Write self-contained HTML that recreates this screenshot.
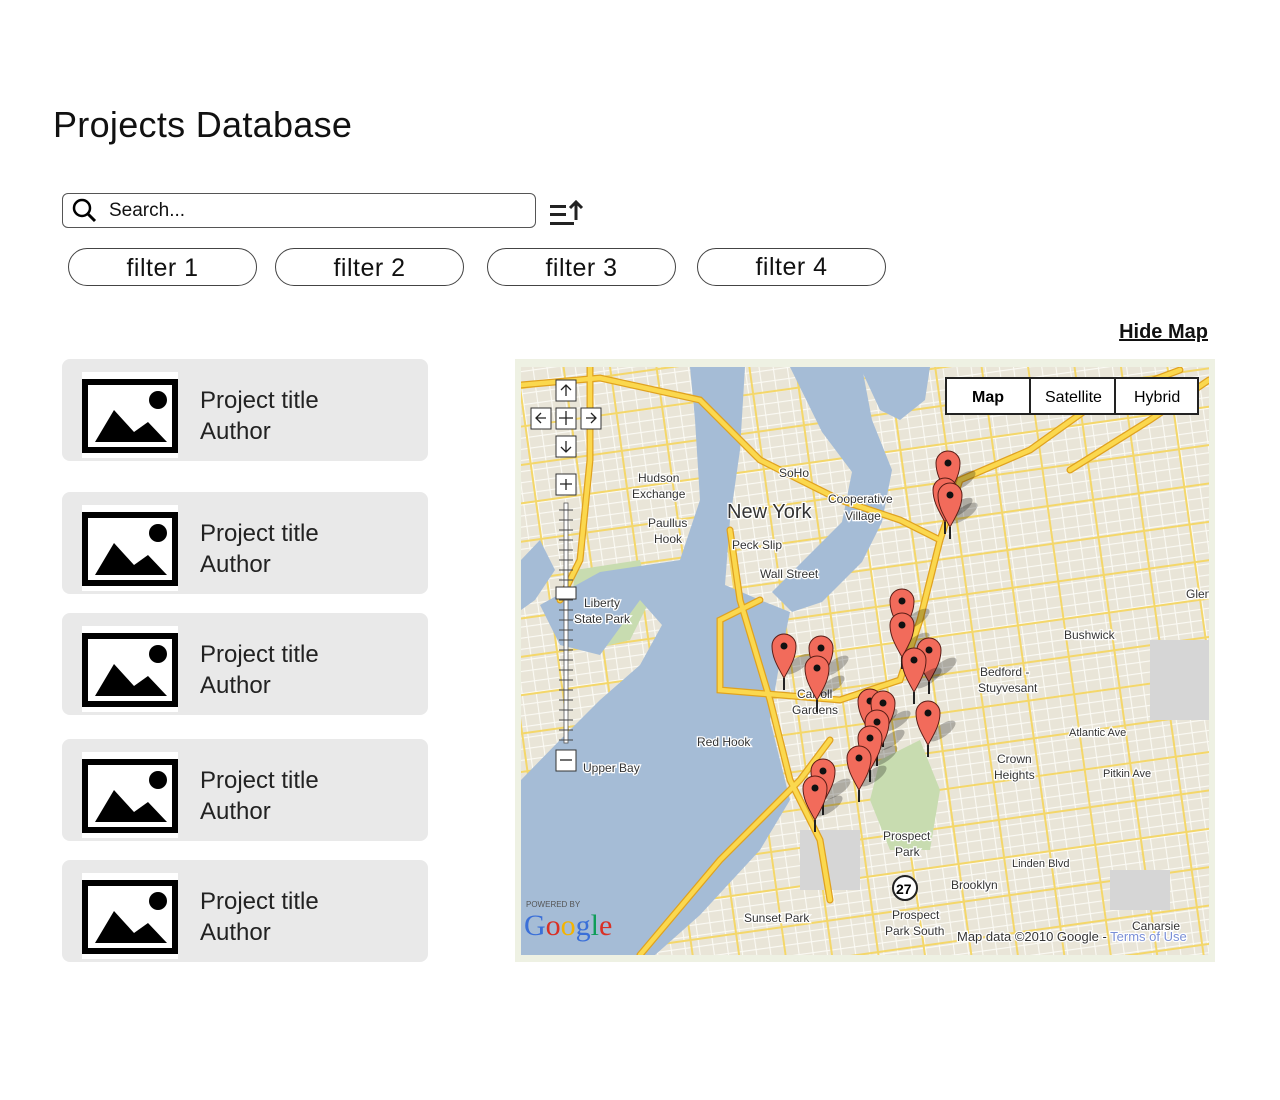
<!DOCTYPE html>
<html><head><meta charset="utf-8">
<style>
*{margin:0;padding:0;box-sizing:border-box}
body{width:1280px;height:1100px;background:#fff;font-family:"Liberation Sans",sans-serif;color:#111;position:relative;overflow:hidden}
.abs{position:absolute}
h1{position:absolute;left:53px;top:104px;font-size:36px;font-weight:normal;letter-spacing:0.3px}
.search{left:62px;top:193px;width:474px;height:35px;border:1.3px solid #555;border-radius:6px}
.search span{position:absolute;left:46px;top:6px;font-size:19px}
.pill{height:38px;border:1.3px solid #444;border-radius:19px;font-size:25px;text-align:center;line-height:38px;width:189px;top:248px;letter-spacing:0.5px}
.hide{right:72px;top:321px;font-size:20px;font-weight:bold;text-decoration:underline}
.card{left:62px;width:366px;height:102px;background:#e9e9e9;border-radius:8px}
.card .img{position:absolute;left:20px;top:13px;width:96px;height:86px;background:#fff}
.card .t{position:absolute;left:138px;top:26px;font-size:24px;line-height:31px;color:#222}
.map{left:515px;top:359px;width:700px;height:603px;background:#eef1e3}
.lbl{font-family:"Liberation Sans",sans-serif;font-size:12px;fill:#333;paint-order:stroke;stroke:#fff;stroke-width:2.5px}
</style></head><body>
<h1>Projects Database</h1>
<div class="abs search">
<svg class="abs" style="left:9px;top:4px" width="26" height="26" viewBox="0 0 26 26"><circle cx="10" cy="10" r="8" fill="none" stroke="#000" stroke-width="2.5"/><line x1="16" y1="16" x2="23" y2="23" stroke="#000" stroke-width="3"/></svg>
<span>Search...</span></div>
<svg class="abs" style="left:548px;top:196px" width="42" height="34" viewBox="0 0 42 34"><rect x="2" y="9" width="16" height="3" fill="#222"/><rect x="2" y="17" width="16" height="3" fill="#222"/><rect x="2" y="26" width="24" height="3" fill="#222"/><path d="M28 24V6M22 12l6-6 6 6" fill="none" stroke="#222" stroke-width="3"/></svg>
<div class="abs pill" style="left:68px">filter 1</div>
<div class="abs pill" style="left:275px">filter 2</div>
<div class="abs pill" style="left:487px">filter 3</div>
<div class="abs pill" style="left:697px;line-height:36px">filter 4</div>
<div class="abs hide">Hide Map</div>

<div class="abs card" style="top:359px"><div class="img"><svg width="96" height="86" viewBox="0 0 96 86"><rect x="3" y="10" width="90" height="68" fill="none" stroke="#000" stroke-width="6"/><circle cx="76" cy="28" r="9"/><path d="M13 70L32 38 52 60 66 50 85 70Z"/></svg></div><div class="t">Project title<br>Author</div></div>
<div class="abs card" style="top:492px"><div class="img"><svg width="96" height="86" viewBox="0 0 96 86"><rect x="3" y="10" width="90" height="68" fill="none" stroke="#000" stroke-width="6"/><circle cx="76" cy="28" r="9"/><path d="M13 70L32 38 52 60 66 50 85 70Z"/></svg></div><div class="t">Project title<br>Author</div></div>
<div class="abs card" style="top:613px"><div class="img"><svg width="96" height="86" viewBox="0 0 96 86"><rect x="3" y="10" width="90" height="68" fill="none" stroke="#000" stroke-width="6"/><circle cx="76" cy="28" r="9"/><path d="M13 70L32 38 52 60 66 50 85 70Z"/></svg></div><div class="t">Project title<br>Author</div></div>
<div class="abs card" style="top:739px"><div class="img"><svg width="96" height="86" viewBox="0 0 96 86"><rect x="3" y="10" width="90" height="68" fill="none" stroke="#000" stroke-width="6"/><circle cx="76" cy="28" r="9"/><path d="M13 70L32 38 52 60 66 50 85 70Z"/></svg></div><div class="t">Project title<br>Author</div></div>
<div class="abs card" style="top:860px"><div class="img"><svg width="96" height="86" viewBox="0 0 96 86"><rect x="3" y="10" width="90" height="68" fill="none" stroke="#000" stroke-width="6"/><circle cx="76" cy="28" r="9"/><path d="M13 70L32 38 52 60 66 50 85 70Z"/></svg></div><div class="t">Project title<br>Author</div></div>

<div class="abs map"></div>
<svg class="abs" style="left:521px;top:367px" width="688" height="588" viewBox="521 367 688 588">
<defs>
<g id="pin"><ellipse cx="14" cy="-14" rx="16" ry="6" fill="#000" opacity="0.25" transform="rotate(-35 14 -14)"/><path d="M0 0C-8 -14 -12 -22 -12 -32A12 12 0 0 1 12 -32C12 -22 8 -14 0 0Z" fill="#f26b5b" stroke="#5a1d16" stroke-width="1"/><circle cx="0" cy="-32" r="3.5" fill="#111"/><line x1="0" y1="0" x2="0" y2="12" stroke="#222" stroke-width="2"/></g>
<pattern id="st" width="14" height="11" patternUnits="userSpaceOnUse" patternTransform="rotate(-8)"><rect width="14" height="11" fill="#e9e5d8"/><path d="M0 0.5H14M0.5 0V11" stroke="#fbfaf4" stroke-width="1.2"/></pattern>
<pattern id="yr" width="46" height="38" patternUnits="userSpaceOnUse" patternTransform="rotate(-8)"><path d="M0 1H46M1 0V38" stroke="#f4d76a" stroke-width="2"/></pattern>
</defs>
<rect x="521" y="367" width="688" height="588" fill="url(#st)"/>
<rect x="521" y="367" width="688" height="588" fill="url(#yr)"/>
<!-- parks -->
<path d="M575 570L640 560 650 600 630 640 590 650 570 620Z" fill="#c8dcb0"/>
<path d="M880 760L920 740 940 790 930 850 890 850 870 800Z" fill="#c8dcb0"/>
<rect x="1150" y="640" width="59" height="80" fill="#d6d6d6"/>
<rect x="800" y="830" width="60" height="60" fill="#d6d6d6"/>
<rect x="1110" y="870" width="60" height="40" fill="#d6d6d6"/>
<!-- water -->
<path d="M690 367L745 367 740 450 730 520 725 585 760 600 790 612 780 660 770 720 790 800 760 850 700 915 655 955 521 955 521 780 560 740 600 700 640 665 662 625 640 600 600 655 560 645 540 605 600 572 680 560 700 500 695 420Z" fill="#a5bcd6"/>
<path d="M790 367L862 367 872 420 892 470 882 522 862 562 822 602 792 612 772 592 802 562 842 522 852 472 822 432Z" fill="#a5bcd6"/>
<path d="M860 367L930 367 925 400 900 420 880 410Z" fill="#a5bcd6"/>
<path d="M521 560L540 540 555 570 535 600 521 610Z" fill="#a5bcd6"/>
<!-- highways -->
<g fill="none" stroke="#e0a21f" stroke-width="7" stroke-linecap="round">
<path d="M521 385L600 378 700 400 760 460 840 500 900 520 940 540 960 480 1030 450 1100 400 1180 370"/>
<path d="M940 540L920 620 900 680 840 700 720 690 720 620 760 600"/>
<path d="M730 530L740 600 770 700 790 780 820 840 830 900"/>
<path d="M640 955L720 860 800 780 830 740"/>
<path d="M590 367L590 460 580 560 560 600"/>
<path d="M1209 380L1150 420 1070 470"/>
</g>
<g fill="none" stroke="#fbd84e" stroke-width="4.5" stroke-linecap="round">
<path d="M521 385L600 378 700 400 760 460 840 500 900 520 940 540 960 480 1030 450 1100 400 1180 370"/>
<path d="M940 540L920 620 900 680 840 700 720 690 720 620 760 600"/>
<path d="M730 530L740 600 770 700 790 780 820 840 830 900"/>
<path d="M640 955L720 860 800 780 830 740"/>
<path d="M590 367L590 460 580 560 560 600"/>
<path d="M1209 380L1150 420 1070 470"/>
</g>
<!-- labels -->
<text class="lbl" x="638" y="482">Hudson</text><text class="lbl" x="632" y="498">Exchange</text>
<text class="lbl" x="648" y="527">Paullus</text><text class="lbl" x="654" y="543">Hook</text>
<text class="lbl" x="779" y="477">SoHo</text>
<text class="lbl" x="727" y="518" style="font-size:20px">New York</text>
<text class="lbl" x="828" y="503">Cooperative</text><text class="lbl" x="845" y="520">Village</text>
<text class="lbl" x="732" y="549">Peck Slip</text>
<text class="lbl" x="760" y="578">Wall Street</text>
<text class="lbl" x="584" y="607">Liberty</text><text class="lbl" x="574" y="623">State Park</text>
<text class="lbl" x="1064" y="639">Bushwick</text>
<text class="lbl" x="980" y="676">Bedford -</text><text class="lbl" x="978" y="692">Stuyvesant</text>
<text class="lbl" x="797" y="698">Carroll</text><text class="lbl" x="792" y="714">Gardens</text>
<text class="lbl" x="697" y="746">Red Hook</text>
<text class="lbl" x="583" y="772">Upper Bay</text>
<text class="lbl" x="1069" y="736" style="font-size:11px">Atlantic Ave</text>
<text class="lbl" x="997" y="763">Crown</text><text class="lbl" x="994" y="779">Heights</text>
<text class="lbl" x="1103" y="777" style="font-size:11px">Pitkin Ave</text>
<text class="lbl" x="883" y="840">Prospect</text><text class="lbl" x="895" y="856">Park</text>
<text class="lbl" x="1012" y="867" style="font-size:11px">Linden Blvd</text>
<text class="lbl" x="951" y="889">Brooklyn</text>
<text class="lbl" x="744" y="922">Sunset Park</text>
<text class="lbl" x="892" y="919">Prospect</text><text class="lbl" x="885" y="935">Park South</text>
<text class="lbl" x="1132" y="930">Canarsie</text>
<text class="lbl" x="1186" y="598">Glen</text>
<circle cx="905" cy="888" r="12" fill="#fff" stroke="#222" stroke-width="2"/><text x="896" y="894" style="font-size:14px;font-weight:bold;font-family:'Liberation Sans'">27</text>
<text x="526" y="907" style="font-size:8px;fill:#555;font-family:'Liberation Sans'">POWERED BY</text>
<text x="524" y="935" style="font-size:30px;font-family:'Liberation Serif';fill:#3a6fd8">G<tspan fill="#d93025">o</tspan><tspan fill="#f4b400">o</tspan>g<tspan fill="#0f9d58">l</tspan><tspan fill="#d93025">e</tspan></text>
<text class="lbl" x="957" y="941" style="font-size:13px">Map data ©2010 Google - <tspan style="fill:#7a8fd6">Terms of Use</tspan></text>
<!-- pins -->
<g>
<use href="#pin" x="948" y="495"/><use href="#pin" x="945" y="522"/><use href="#pin" x="950" y="527"/>
<use href="#pin" x="902" y="633"/><use href="#pin" x="902" y="657"/>
<use href="#pin" x="929" y="682"/><use href="#pin" x="914" y="692"/>
<use href="#pin" x="784" y="678"/><use href="#pin" x="821" y="680"/><use href="#pin" x="817" y="700"/>
<use href="#pin" x="870" y="733"/><use href="#pin" x="883" y="735"/><use href="#pin" x="877" y="754"/>
<use href="#pin" x="870" y="770"/><use href="#pin" x="859" y="790"/><use href="#pin" x="928" y="745"/>
<use href="#pin" x="823" y="803"/><use href="#pin" x="815" y="820"/>
</g>
<!-- controls -->
<g fill="#fff" stroke="#333" stroke-width="1">
<rect x="556" y="380" width="20" height="21"/><rect x="531" y="408" width="20" height="21"/><rect x="556" y="408" width="20" height="21"/><rect x="581" y="408" width="20" height="21"/><rect x="556" y="436" width="20" height="21"/><rect x="556" y="474" width="20" height="21"/><rect x="556" y="750" width="20" height="21"/>
</g>
<g stroke="#222" stroke-width="1.3" fill="none">
<path d="M566 396V385M561 390l5-5 5 5"/><path d="M546 418H536M541 413l-5 5 5 5"/><path d="M586 418H596M591 413l5 5-5 5"/><path d="M566 441V452M561 447l5 5 5-5"/><path d="M566 479V490M560 484H572"/><path d="M560 760H572"/><path d="M566 411v14M559 418h14"/>
</g>
<rect x="564" y="503" width="4" height="240" fill="#fff" stroke="#555" stroke-width="0.8"/>
<g stroke="#444" stroke-width="1"><path d="M559 510h14M559 520h14M559 530h14M559 540h14M559 550h14M559 560h14M559 570h14M559 580h14M559 600h14M559 610h14M559 620h14M559 630h14M559 640h14M559 650h14M559 660h14M559 670h14M559 680h14M559 690h14M559 700h14M559 710h14M559 720h14M559 730h14M559 740h14"/></g>
<rect x="556" y="587" width="20" height="12" fill="#fff" stroke="#333"/>
<!-- map type -->
<rect x="946" y="378" width="252" height="36" fill="#fff" stroke="#222" stroke-width="2"/>
<line x1="1030" y1="378" x2="1030" y2="414" stroke="#222" stroke-width="2"/><line x1="1115" y1="378" x2="1115" y2="414" stroke="#222" stroke-width="2"/>
<text x="972" y="402" style="font-size:16px;font-weight:bold;font-family:'Liberation Sans'">Map</text>
<text x="1045" y="402" style="font-size:16px;font-family:'Liberation Sans'">Satellite</text>
<text x="1134" y="402" style="font-size:16px;font-family:'Liberation Sans'">Hybrid</text>
</svg>
</body></html>
